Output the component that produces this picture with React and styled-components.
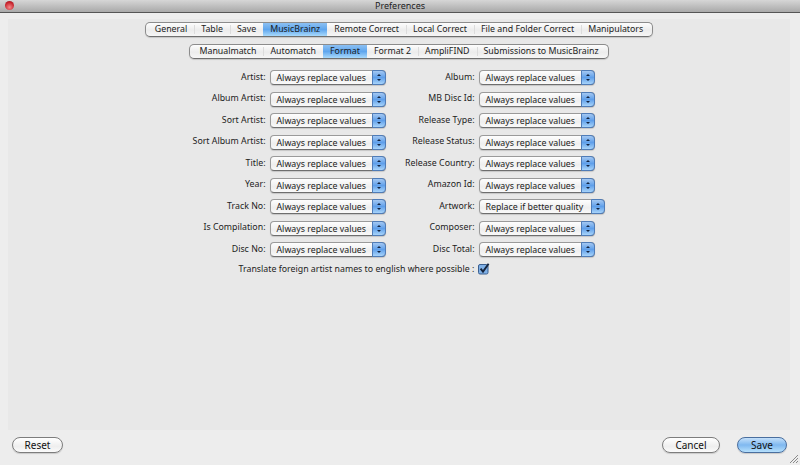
import React from "react";
import styled, { createGlobalStyle } from "styled-components";

const GlobalStyle = createGlobalStyle`
  html, body {
    margin: 0;
    padding: 0;
    background: #ededed;
  }
  body {
    font-family: "Noto Sans", "Liberation Sans", sans-serif;
    font-size: 8.8px;
    color: #1c1c1c;
  }
`;

const mainTabs = ["General", "Table", "Save", "MusicBrainz", "Remote Correct", "Local Correct", "File and Folder Correct", "Manipulators"];
const subTabs = ["Manualmatch", "Automatch", "Format", "Format 2", "AmpliFIND", "Submissions to MusicBrainz"];

const ALWAYS = "Always replace values";
const rows = [
  ["Artist:", ALWAYS, "Album:", ALWAYS],
  ["Album Artist:", ALWAYS, "MB Disc Id:", ALWAYS],
  ["Sort Artist:", ALWAYS, "Release Type:", ALWAYS],
  ["Sort Album Artist:", ALWAYS, "Release Status:", ALWAYS],
  ["Title:", ALWAYS, "Release Country:", ALWAYS],
  ["Year:", ALWAYS, "Amazon Id:", ALWAYS],
  ["Track No:", ALWAYS, "Artwork:", "Replace if better quality"],
  ["Is Compilation:", ALWAYS, "Composer:", ALWAYS],
  ["Disc No:", ALWAYS, "Disc Total:", ALWAYS],
];

export default function App() {
  return (
    <Window>
      <GlobalStyle />
      <TitleBar>
        <CloseDot />
        <Title>Preferences</Title>
      </TitleBar>
      <Content>
        <Panel>
          <TabRow>
            {mainTabs.map((t) => (
              <Tab key={t} $active={t === "MusicBrainz"}>{t}</Tab>
            ))}
          </TabRow>
          <TabRow>
            {subTabs.map((t) => (
              <Tab key={t} $active={t === "Format"}>{t}</Tab>
            ))}
          </TabRow>
          <Form>
            {rows.map(([a, av, b, bv]) => (
              <React.Fragment key={a}>
                <Label>{a}</Label>
                <Select>{av}<Stepper /></Select>
                <Label>{b}</Label>
                <Select $wide={bv !== ALWAYS}>{bv}<Stepper /></Select>
              </React.Fragment>
            ))}
          </Form>
          <CheckRow>
            <span>Translate foreign artist names to english where possible :</span>
            <Check viewBox="0 0 12 12">
              <rect x="0.5" y="1.5" width="9.5" height="9.5" rx="1.5" fill="#7fb0e6" stroke="#3b5f8f" />
              <path d="M2.6 5.6 L5 8.6 L10.6 0.8" fill="none" stroke="#14233c" strokeWidth="1.9" />
            </Check>
          </CheckRow>
        </Panel>
        <Footer>
          <Button $w={51}>Reset</Button>
          <FooterRight>
            <Button $w={58}>Cancel</Button>
            <Button $w={50} $primary>Save</Button>
          </FooterRight>
        </Footer>
      </Content>
      <Grip viewBox="0 0 10 10">
        <path d="M1 9 L9 1 M4 9 L9 4 M7 9 L9 7" stroke="#8a8a8a" strokeWidth="1" />
      </Grip>
    </Window>
  );
}

const Window = styled.div`
  width: 800px;
  height: 465px;
  position: relative;
  overflow: hidden;
  display: flex;
  flex-direction: column;
  background: #ededed;
`;

const TitleBar = styled.div`
  height: 12px;
  flex: none;
  display: flex;
  align-items: center;
  justify-content: center;
  position: relative;
  background: linear-gradient(#d6d6d6, #a9a9a9);
  border-bottom: 1px solid #555;
`;

const CloseDot = styled.span`
  position: absolute;
  left: 5px;
  top: 1px;
  width: 9px;
  height: 9px;
  border-radius: 50%;
  background: radial-gradient(circle at 50% 70%, #f58a8a, #c5202a 65%, #8a1a20);
`;

const Title = styled.span`
  font-size: 9px;
  color: #222;
  line-height: 12px;
`;

const Content = styled.div`
  flex: 1;
  display: flex;
  flex-direction: column;
  padding: 6px 10px 0 8px;
`;

const Panel = styled.div`
  height: 411px;
  flex: none;
  background: #e8e8e8;
  padding-top: 3px;
  display: flex;
  flex-direction: column;
  align-items: center;
  box-sizing: border-box;
`;

const TabRow = styled.div`
  display: flex;
  margin-bottom: 7px;
  padding: 0 2px;
  align-items: stretch;
  background: linear-gradient(#fdfdfd, #ececec 55%, #f6f6f6);
  border: 1px solid #8c8c8c;
  border-bottom-color: #6f6f6f;
  border-radius: 5px;
  height: 13px;
  box-shadow: 0 1px 1px rgba(0, 0, 0, 0.15);
`;

const Tab = styled.div`
  padding: 0 7px;
  line-height: 13px;
  white-space: nowrap;
  position: relative;
  background: ${(p) => (p.$active ? "linear-gradient(#8cc0f2, #5fa6ee 50%, #a9dafc)" : "none")};
  & + &::before {
    content: "";
    position: absolute;
    left: 0;
    top: 2px;
    bottom: 2px;
    width: 1px;
    background: ${(p) => (p.$active ? "transparent" : "#dcdcdc")};
  }
`;

const Form = styled.div`
  margin: 1px 4px 0 0;
  display: grid;
  grid-template-columns: 80px 116px 93px 126px;
  grid-auto-rows: 21.5px;
  align-items: center;
  width: 415px;
`;

const Label = styled.div`
  white-space: nowrap;
  padding-right: 4px;
  justify-self: end;
  margin-top: -2px;
`;

const Select = styled.div`
  position: relative;
  width: ${(p) => (p.$wide ? "126px" : "116px")};
  height: 15px;
  box-sizing: border-box;
  padding-left: 6px;
  line-height: 14px;
  white-space: nowrap;
  background: linear-gradient(#fefefe, #eeeeee 60%, #fafafa);
  border: 1px solid #9a9a9a;
  border-bottom-color: #6e6e6e;
  border-radius: 4px;
  box-shadow: 0 1px 1px rgba(0, 0, 0, 0.15);
`;

const Stepper = styled.span`
  position: absolute;
  right: -1px;
  top: -1px;
  bottom: -1px;
  width: 14px;
  border-radius: 0 4px 4px 0;
  background: linear-gradient(#a4c8f2, #5f9fea 50%, #a8d4fa);
  border: 1px solid #4f7cb8;
  box-sizing: border-box;
  &::before,
  &::after {
    content: "";
    position: absolute;
    left: 4px;
    border-left: 2px solid transparent;
    border-right: 2px solid transparent;
  }
  &::before {
    top: 3px;
    border-bottom: 2px solid #12233f;
  }
  &::after {
    bottom: 3px;
    border-top: 2px solid #12233f;
  }
`;

const CheckRow = styled.div`
  display: flex;
  align-items: center;
  gap: 4px;
  height: 16px;
  margin-right: 69px;
`;

const Check = styled.svg`
  width: 12px;
  height: 12px;
  flex: none;
`;

const Footer = styled.div`
  display: flex;
  justify-content: space-between;
  padding: 7px 3px 0 4px;
`;

const FooterRight = styled.div`
  display: flex;
  gap: 17px;
`;

const Button = styled.button`
  font: inherit;
  font-size: 10px;
  width: ${(p) => p.$w}px;
  height: 16px;
  padding: 0;
  color: #111;
  border-radius: 8px;
  border: 1px solid ${(p) => (p.$primary ? "#4a6f9f" : "#7d7d7d")};
  background: ${(p) =>
    p.$primary
      ? "linear-gradient(#c4e0fa, #7fb8f0 50%, #b6e0fc)"
      : "linear-gradient(#ffffff, #eeeeee 60%, #fbfbfb)"};
  box-shadow: 0 1px 1px rgba(0, 0, 0, 0.15);
`;

const Grip = styled.svg`
  position: absolute;
  right: 1px;
  bottom: 1px;
  width: 10px;
  height: 10px;
`;
